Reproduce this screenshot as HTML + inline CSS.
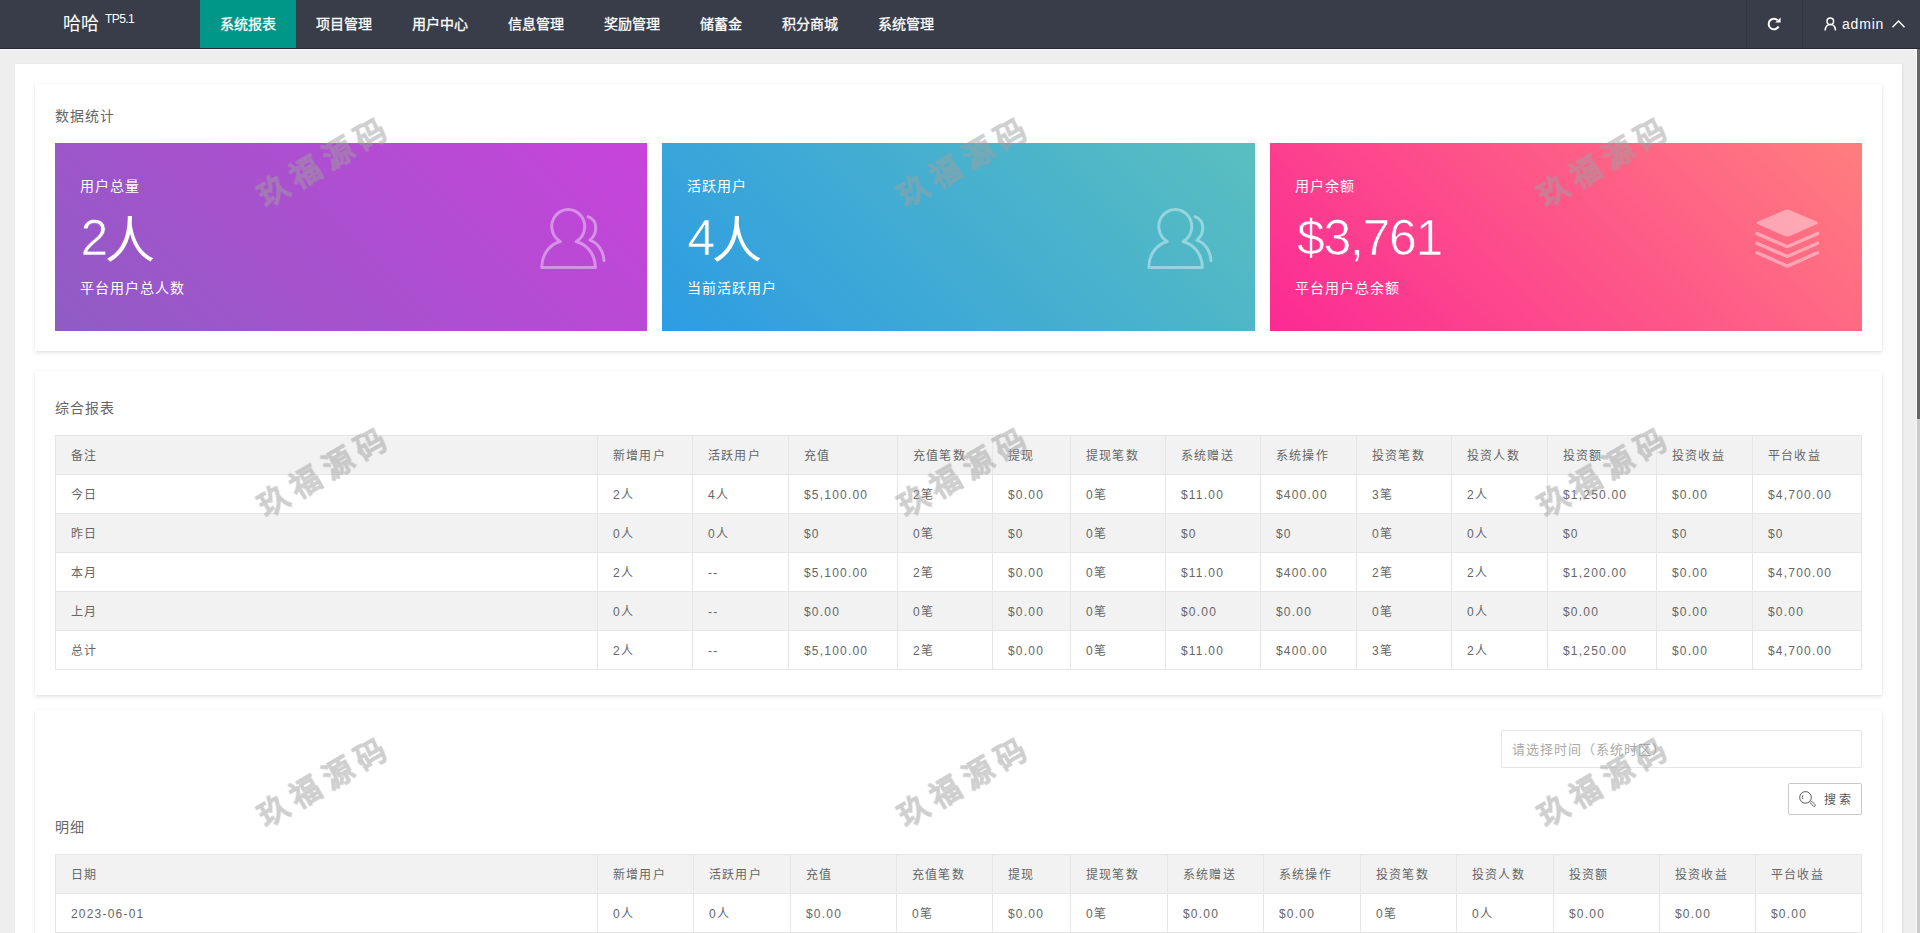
<!DOCTYPE html>
<html lang="zh-CN">
<head>
<meta charset="utf-8">
<title>系统报表</title>
<style>
*{margin:0;padding:0;box-sizing:border-box}
html,body{width:1920px;height:933px;overflow:hidden}
body{position:relative;background:#eee;font-family:"Liberation Sans",sans-serif;font-size:14px;color:#666;letter-spacing:1px}
ul{list-style:none}

/* ---------- header ---------- */
.header{position:absolute;left:0;top:0;width:1920px;height:48px;background:#393D49;color:#fff;letter-spacing:0;z-index:5}
.hline1{position:absolute;left:0;top:48px;width:1920px;height:1px;background:#262932;z-index:5}
.hline2{position:absolute;left:0;top:49px;width:1917px;height:1px;background:#fbfbfb;z-index:5}
.logo{position:absolute;left:0;top:0;width:200px;height:48px;line-height:48px;font-size:18px;color:#fff;padding-left:63px;white-space:nowrap}
.logo sup{position:absolute;left:105px;top:11px;font-size:12px;line-height:16px;letter-spacing:-0.6px}
.nav{position:absolute;left:200px;top:0;height:48px;display:flex}
.nav li{height:48px;line-height:48px;padding:0 20px;font-size:14px;color:#fff;white-space:nowrap;-webkit-text-stroke:.3px #fff}
.nav li.on{background:#009688}
.hr{position:absolute;top:0;height:48px;border-left:1px solid #32353f}
.hr.r1{left:1746px;width:56px}
.hr.r2{left:1802px;width:118px}
.hr svg{position:absolute}
.admin{position:absolute;left:39px;top:0;line-height:49px;font-size:14px;letter-spacing:.8px;color:#fff}

/* ---------- main ---------- */
.main{position:absolute;left:15px;top:64px;width:1887px;height:900px;background:#fff;box-shadow:1px 0 2px rgba(0,0,0,.06)}
.card{position:absolute;left:35px;width:1847px;background:#fff;box-shadow:0 2px 4px rgba(0,0,0,.1),0 0 2px rgba(0,0,0,.05)}
.c1{top:84px;height:267px}
.c2{top:370.6px;height:324.2px}
.c3{top:709.8px;height:300px}
.ttl{position:absolute;left:55px;font-size:14px;line-height:20px;color:#666;white-space:nowrap}

/* ---------- stat boxes ---------- */
.box{position:absolute;top:143px;height:187.8px;width:592.3px;color:#fff;overflow:hidden}
.b1{left:55px;background:linear-gradient(45deg,#8f5cc4,#c843db)}
.b2{left:662px;width:593px;background:linear-gradient(45deg,#2d9ce3,#5abfbf)}
.b3{left:1270px;width:592px;background:linear-gradient(45deg,#fb2a94,#ff7e7e)}
.box .t1{position:absolute;left:25px;top:33px;font-size:14px;line-height:20px;white-space:nowrap}
.box .t2{position:absolute;left:25.4px;top:65px;font-size:50px;line-height:60px;white-space:nowrap}
.box .t2 i{font-style:normal;position:relative;left:-4px;top:3px;-webkit-text-stroke:0}
.b3 .t2{left:27px;letter-spacing:-1.3px}
.b1 .t2{-webkit-text-stroke:.7px #9a57c9}
.b2 .t2{-webkit-text-stroke:.7px #36a3dc}
.b3 .t2{-webkit-text-stroke:.7px #fc3e8f}
.box .t3{position:absolute;left:25px;top:135px;font-size:14px;line-height:20px;white-space:nowrap}
.box svg{position:absolute}

/* ---------- tables ---------- */
table{position:absolute;left:55px;width:1807px;table-layout:fixed;border-collapse:separate;border-spacing:0;border-left:1px solid #e6e6e6;border-top:1px solid #e6e6e6;font-size:12px;color:#666;letter-spacing:1.2px}
th,td{height:39px;line-height:36px;padding:2px 0 0 15px;border-right:1px solid #e6e6e6;border-bottom:1px solid #e6e6e6;text-align:left;font-weight:normal;white-space:nowrap;overflow:hidden}
th{background:#f2f2f2}
tr.ev td{background:#f2f2f2}
.tb1{top:435px}
.tb2{top:854px}

/* ---------- search ---------- */
.inp{position:absolute;left:1501px;top:730px;width:361px;height:38px;border:1px solid #e6e6e6;border-radius:2px;background:#fff;padding-left:10px;line-height:37px;font-size:13px;color:#aaa;white-space:nowrap}
.btn{position:absolute;left:1788px;top:783px;width:74px;height:32px;border:1px solid #c9c9c9;border-radius:2px;background:#fff}
.btn span{position:absolute;top:9px;font-size:12px;line-height:14px;color:#555;letter-spacing:0}
.btn svg{position:absolute;left:9.3px;top:6px}

/* ---------- watermark ---------- */
.wm{position:absolute;width:220px;height:44px;margin:-22px 0 0 -110px;line-height:44px;text-align:center;font-size:30px;letter-spacing:7.5px;text-indent:7.5px;color:#a0a0a0;-webkit-text-stroke:1.8px #a0a0a0;opacity:.5;transform:rotate(-30deg);white-space:nowrap;z-index:4;filter:blur(.5px)}

/* ---------- scrollbar ---------- */
.sbl{position:absolute;left:1916px;top:49px;width:1px;height:884px;background:#f8f8f8;z-index:6}
.sbt{position:absolute;left:1917px;top:49px;width:3px;height:884px;background:#cbcbcb;z-index:6}
.sbh{position:absolute;left:1917px;top:49px;width:3px;height:370px;background:#666;z-index:7}
</style>
</head>
<body>

<!-- header -->
<div class="header">
  <div class="logo">哈哈<sup>TP5.1</sup></div>
  <ul class="nav">
    <li class="on">系统报表</li><li>项目管理</li><li>用户中心</li><li>信息管理</li><li>奖励管理</li><li>储蓄金</li><li>积分商城</li><li>系统管理</li>
  </ul>
  <div class="hr r1">
    <svg style="left:20px;top:17px" width="15" height="14" viewBox="0 0 15 14"><path d="M11.6 9.6A5.3 5.3 0 1 1 10.6 3.2" fill="none" stroke="#fff" stroke-width="2"/><path d="M8.2 5.6L13.6 0.6L13.6 5.6Z" fill="#fff"/></svg>
  </div>
  <div class="hr r2">
    <svg style="left:21px;top:17px" width="13" height="14" viewBox="0 0 13 14"><circle cx="6.3" cy="4.2" r="3.3" fill="none" stroke="#fff" stroke-width="1.5"/><path d="M1.2 13.6C1.2 9.6 3.4 7.6 6.3 7.6C9.2 7.6 11.4 9.6 11.4 13.6" fill="none" stroke="#fff" stroke-width="1.5"/></svg>
    <span class="admin">admin</span>
    <svg style="left:88px;top:18.5px" width="15" height="10" viewBox="0 0 15 10"><path d="M1.5 8.2L7.5 2L13.5 8.2" fill="none" stroke="#fff" stroke-width="1.4"/></svg>
  </div>
</div>
<div class="hline1"></div><div class="hline2"></div>

<!-- main -->
<div class="main"></div>
<div class="card c1"></div>
<div class="card c2"></div>
<div class="card c3"></div>

<div class="ttl" style="top:106px">数据统计</div>
<div class="ttl" style="top:398px">综合报表</div>
<div class="ttl" style="top:817px">明细</div>

<div class="box b1">
    <div class="t1">用户总量</div><div class="t2">2<i>人</i></div><div class="t3">平台用户总人数</div>
    <svg style="left:470px;top:52px" width="100" height="90" viewBox="0 0 100 90" fill="none" stroke="rgba(255,255,255,.4)" stroke-width="3" stroke-linecap="round" stroke-linejoin="round">
      <path d="M35.3 46.5A16.45 17.1 0 1 1 51.2 46.5C62.4 49.6 70.3 59.8 70.3 72.4L16.8 72.4C16.8 59.8 24.2 49.6 35.3 46.5Z"/>
      <path d="M63 21.7C67.8 23.6 70.8 27.8 70.8 32.6C70.8 38 68.4 42.4 65 45.2C73 48.2 78.6 56 79 65.8"/>
    </svg>
</div>
<div class="box b2">
    <div class="t1">活跃用户</div><div class="t2">4<i>人</i></div><div class="t3">当前活跃用户</div>
    <svg style="left:470px;top:52px" width="100" height="90" viewBox="0 0 100 90" fill="none" stroke="rgba(255,255,255,.4)" stroke-width="3" stroke-linecap="round" stroke-linejoin="round">
      <path d="M35.3 46.5A16.45 17.1 0 1 1 51.2 46.5C62.4 49.6 70.3 59.8 70.3 72.4L16.8 72.4C16.8 59.8 24.2 49.6 35.3 46.5Z"/>
      <path d="M63 21.7C67.8 23.6 70.8 27.8 70.8 32.6C70.8 38 68.4 42.4 65 45.2C73 48.2 78.6 56 79 65.8"/>
    </svg>
</div>
<div class="box b3">
    <div class="t1">用户余额</div><div class="t2">$3,761</div><div class="t3">平台用户总余额</div>
    <svg style="left:470px;top:52px" width="100" height="90" viewBox="0 0 100 90">
      <path d="M44.6 15.2Q47.3 14 50 15.2L76.6 26.6Q79.6 27.9 76.6 29.2L50 40.9Q47.3 42.1 44.6 40.9L18 29.2Q15 27.9 18 26.6Z" fill="rgba(255,255,255,.4)"/>
      <g fill="none" stroke="rgba(255,255,255,.4)" stroke-width="3.4" stroke-linecap="round" stroke-linejoin="round">
        <path d="M17 38.6L47.3 51.8L77.6 38.6"/>
        <path d="M17 48.2L47.3 61.5L77.6 48.2"/>
        <path d="M17 57.8L47.3 71.1L77.6 57.8"/>
      </g>
    </svg>
</div>
<table class="tb1">
  <colgroup><col style="width:542px"><col style="width:95px"><col style="width:96px"><col style="width:109px"><col style="width:95px"><col style="width:78px"><col style="width:95px"><col style="width:95px"><col style="width:96px"><col style="width:95px"><col style="width:96px"><col style="width:109px"><col style="width:96px"><col style="width:109px"></colgroup>
  <tr><th>备注</th><th>新增用户</th><th>活跃用户</th><th>充值</th><th>充值笔数</th><th>提现</th><th>提现笔数</th><th>系统赠送</th><th>系统操作</th><th>投资笔数</th><th>投资人数</th><th>投资额</th><th>投资收益</th><th>平台收益</th></tr>
  <tr><td>今日</td><td>2人</td><td>4人</td><td>$5,100.00</td><td>2笔</td><td>$0.00</td><td>0笔</td><td>$11.00</td><td>$400.00</td><td>3笔</td><td>2人</td><td>$1,250.00</td><td>$0.00</td><td>$4,700.00</td></tr>
  <tr class="ev"><td>昨日</td><td>0人</td><td>0人</td><td>$0</td><td>0笔</td><td>$0</td><td>0笔</td><td>$0</td><td>$0</td><td>0笔</td><td>0人</td><td>$0</td><td>$0</td><td>$0</td></tr>
  <tr><td>本月</td><td>2人</td><td>--</td><td>$5,100.00</td><td>2笔</td><td>$0.00</td><td>0笔</td><td>$11.00</td><td>$400.00</td><td>2笔</td><td>2人</td><td>$1,200.00</td><td>$0.00</td><td>$4,700.00</td></tr>
  <tr class="ev"><td>上月</td><td>0人</td><td>--</td><td>$0.00</td><td>0笔</td><td>$0.00</td><td>0笔</td><td>$0.00</td><td>$0.00</td><td>0笔</td><td>0人</td><td>$0.00</td><td>$0.00</td><td>$0.00</td></tr>
  <tr><td>总计</td><td>2人</td><td>--</td><td>$5,100.00</td><td>2笔</td><td>$0.00</td><td>0笔</td><td>$11.00</td><td>$400.00</td><td>3笔</td><td>2人</td><td>$1,250.00</td><td>$0.00</td><td>$4,700.00</td></tr>
</table>
<div class="inp">请选择时间（系统时区）</div>
<div class="btn">
  <svg width="20" height="18" viewBox="0 0 20 18" fill="none" stroke="#555" stroke-width="1"><circle cx="7.5" cy="7.4" r="5.8"/><path d="M5 5.2A3.2 3.2 0 0 0 5 9.2" stroke-width=".9"/><path d="M12.2 12.6L13.6 11.2L17 14.6Q17.6 15.8 16.6 16.4Q15.8 16.8 15.2 16Z" stroke-width=".9"/></svg>
  <span style="left:34.5px">搜</span><span style="left:50px">索</span>
</div>
<table class="tb2">
  <colgroup><col style="width:542px"><col style="width:96px"><col style="width:97px"><col style="width:106px"><col style="width:96px"><col style="width:78px"><col style="width:97px"><col style="width:96px"><col style="width:97px"><col style="width:96px"><col style="width:97px"><col style="width:106px"><col style="width:96px"><col style="width:106px"></colgroup>
  <tr><th>日期</th><th>新增用户</th><th>活跃用户</th><th>充值</th><th>充值笔数</th><th>提现</th><th>提现笔数</th><th>系统赠送</th><th>系统操作</th><th>投资笔数</th><th>投资人数</th><th>投资额</th><th>投资收益</th><th>平台收益</th></tr>
  <tr><td>2023-06-01</td><td>0人</td><td>0人</td><td>$0.00</td><td>0笔</td><td>$0.00</td><td>0笔</td><td>$0.00</td><td>$0.00</td><td>0笔</td><td>0人</td><td>$0.00</td><td>$0.00</td><td>$0.00</td></tr>
  <tr class="ev"><td>2023-05-31</td><td>0人</td><td>0人</td><td>$0.00</td><td>0笔</td><td>$0.00</td><td>0笔</td><td>$0.00</td><td>$0.00</td><td>0笔</td><td>0人</td><td>$0.00</td><td>$0.00</td><td>$0.00</td></tr>
</table>
<div class="wm" style="left:322.0px;top:162.5px">玖福源码</div>
<div class="wm" style="left:962.0px;top:162.5px">玖福源码</div>
<div class="wm" style="left:1602.0px;top:162.5px">玖福源码</div>
<div class="wm" style="left:322.0px;top:472.5px">玖福源码</div>
<div class="wm" style="left:962.0px;top:472.5px">玖福源码</div>
<div class="wm" style="left:1602.0px;top:472.5px">玖福源码</div>
<div class="wm" style="left:322.0px;top:782.5px">玖福源码</div>
<div class="wm" style="left:962.0px;top:782.5px">玖福源码</div>
<div class="wm" style="left:1602.0px;top:782.5px">玖福源码</div>


<div class="sbl"></div><div class="sbt"></div><div class="sbh"></div>
</body>
</html>
